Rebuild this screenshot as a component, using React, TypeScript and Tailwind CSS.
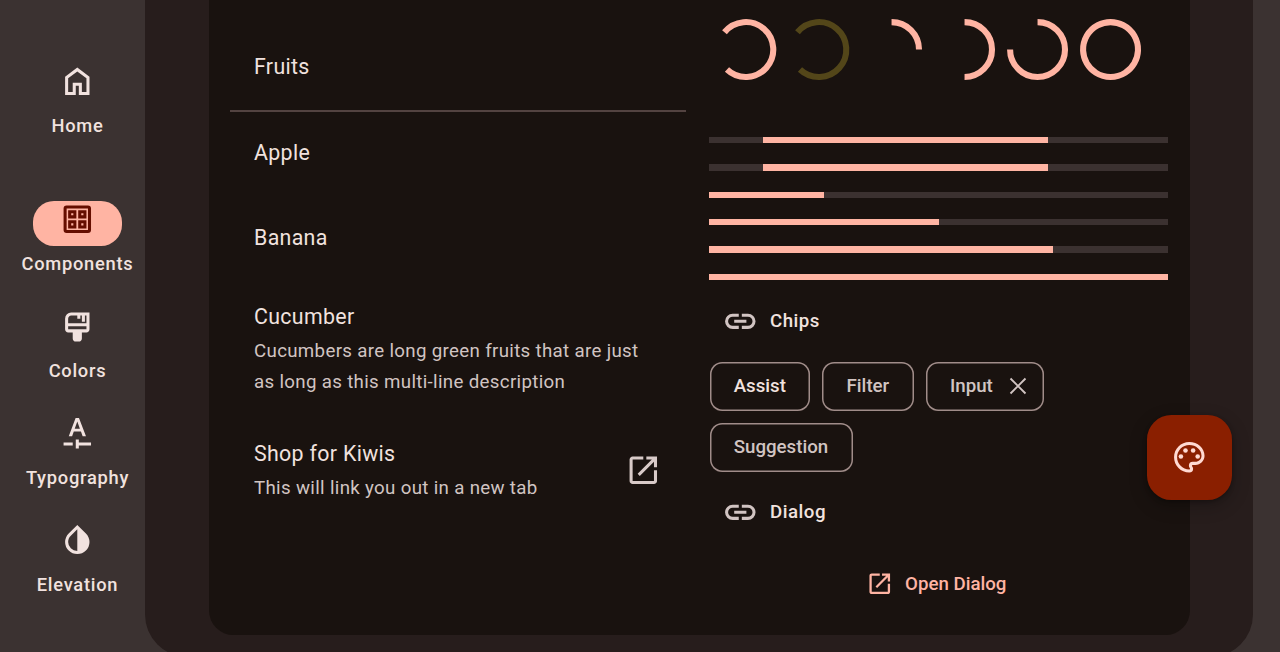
import type { ReactNode } from "react";

const OPEN_IN_NEW =
  "M5 21q-.825 0-1.412-.587T3 19V5q0-.825.588-1.412T5 3h7v2H5v14h14v-7h2v7q0 .825-.587 1.413T19 21zm4.7-5.3-1.4-1.4L17.6 5H14V3h7v7h-2V6.4z";
const LINK =
  "M11 17H7q-2.075 0-3.537-1.463T2 12t1.463-3.537T7 7h4v2H7q-1.25 0-2.125.875T4 12t.875 2.125T7 15h4zm-3-4v-2h8v2zm5 4v-2h4q1.25 0 2.125-.875T20 12t-.875-2.125T17 9h-4V7h4q2.075 0 3.538 1.463T22 12t-1.463 3.538T17 17z";

function Icon({ d, className = "size-[36.6px]" }: { d: string; className?: string }) {
  return (
    <svg viewBox="0 0 24 24" fill="currentColor" fillRule="evenodd" className={`block shrink-0 ${className}`}>
      <path d={d} />
    </svg>
  );
}

const navItems = [
  {
    label: "Home",
    box: "h-[137.5px]",
    d: "M6 19h3v-6h6v6h3v-9l-6-4.5L6 10zm-2 2V9l8-6 8 6v12h-7v-6h-2v6z",
  },
  {
    label: "Components",
    box: "h-[107.1px]",
    active: true,
    d: "M5 3h14a2 2 0 0 1 2 2v14a2 2 0 0 1-2 2H5a2 2 0 0 1-2-2V5a2 2 0 0 1 2-2zM5 5v14h14V5zM6 6h5.4v5.4H6zM8 8v1.4h1.4V8zM12.6 6H18v5.4h-5.4zM14.6 8v1.4H16V8zM6 12.6h5.4V18H6zM8 14.6V16h1.4v-1.4zM12.6 12.6H18V18h-5.4zM14.6 14.6V16H16v-1.4z",
  },
  {
    label: "Colors",
    box: "h-[107px]",
    d: "M11 22q-.825 0-1.412-.587T9 20v-4H6q-.825 0-1.412-.587T4 14V7q0-1.65 1.175-2.825T8 3h12v11q0 .825-.587 1.413T18 16h-3v4q0 .825-.587 1.413T13 22zM6 10h12V5h-1v4h-2V5h-1v2h-2V5H8q-.825 0-1.412.588T6 7zm0 4h12v-2H6z",
  },
  {
    label: "Typography",
    box: "h-[107px]",
    d: "M6.4 14 10.9 2h2.2l4.6 12h-2.2l-1.1-3.1H9.7L8.6 14zM10.3 9h3.4L12 4.3zM3 18h6v2H3zM11 16h2v2h8v2h-8v2h-2z",
  },
  {
    label: "Elevation",
    box: "h-[107px]",
    d: "M12 21q-3.325 0-5.663-2.3T4 13.1q0-1.575.613-3.012T6.35 7.55L12 2l5.65 5.55q1.125 1.1 1.738 2.538T20 13.1q0 3.3-2.337 5.6T12 21m0-2V4.8L7.75 9q-.875.825-1.312 1.863T6 13.1q0 2.425 1.75 4.163T12 19",
  },
];

function Sidebar() {
  return (
    <nav className="flex w-[145px] shrink-0 flex-col pl-[10px] pt-[63.1px] text-[#f1e2df]">
      {navItems.map((item) => (
        <div key={item.label} className={`flex shrink-0 flex-col items-center ${item.box}`}>
          {item.active ? (
            <div className="flex h-[45.6px] w-[89.4px] justify-center rounded-[21px] bg-[#ffb4a3] text-[#650e00]">
              <Icon d={item.d} />
            </div>
          ) : (
            <div className="flex h-[45.6px] justify-center">
              <Icon d={item.d} />
            </div>
          )}
          <span className="mt-[5.4px] text-[18.3px] leading-[24px] font-medium tracking-[0.74px] whitespace-nowrap">
            {item.label}
          </span>
        </div>
      ))}
    </nav>
  );
}

function ListItem({
  title,
  children,
  box,
  descBox = "",
  trailing,
}: {
  title: string;
  children?: ReactNode;
  box: string;
  descBox?: string;
  trailing?: boolean;
}) {
  return (
    <div className={`flex shrink-0 items-center pr-[24.8px] pl-[24px] ${box}`}>
      <div className="min-w-0 flex-1">
        <div className="text-[21.35px] leading-[36.6px] tracking-[0.33px]">{title}</div>
        {children && (
          <div
            className={`text-[18.7px] leading-[30.5px] tracking-[0.33px] whitespace-nowrap text-[#d1c4c2] ${descBox}`}
          >
            {children}
          </div>
        )}
      </div>
      {trailing && <Icon d={OPEN_IN_NEW} className="mt-[1px] size-[36.6px] text-[#d8cac8]" />}
    </div>
  );
}

function FruitList() {
  return (
    <div className="flex w-[456px] shrink-0 flex-col pt-[25px] text-[#f1e2df]">
      <ListItem title="Fruits" box="h-[85.4px]" />
      <div className="h-[1.5px] shrink-0 bg-[#534341]" />
      <ListItem title="Apple" box="h-[83.4px]" />
      <ListItem title="Banana" box="h-[85.4px]" />
      <ListItem title="Cucumber" box="h-[134px]" descBox="-mb-[0.8px] pt-[0.8px]">
        Cucumbers are long green fruits that are just
        <br />
        as long as this multi-line description
      </ListItem>
      <ListItem title="Shop for Kiwis" box="h-[109.8px]" trailing>
        This will link you out in a new tab
      </ListItem>
    </div>
  );
}

const arcs = [
  { d: "M15.5 19.3A27.5 27.5 0 1 1 18 56.6", color: "#ffb4a3" },
  { d: "M15.5 19.3A27.5 27.5 0 1 1 18 56.6", color: "#534619" },
  { d: "M36.6 9.1A27.5 27.5 0 0 1 64.1 36.6", color: "#ffb4a3" },
  { d: "M36.6 9.1A27.5 27.5 0 0 1 36.6 64.1", color: "#ffb4a3" },
  { d: "M36.6 9.1A27.5 27.5 0 1 1 9.1 36.6", color: "#ffb4a3" },
  { d: "M36.6 9.1A27.5 27.5 0 1 1 36.59 9.1Z", color: "#ffb4a3" },
];

const bars = [
  { start: 11.8, end: 73.85 },
  { start: 11.7, end: 73.85 },
  { start: 0, end: 25 },
  { start: 0, end: 50 },
  { start: 0, end: 75 },
  { start: 0, end: 100 },
];

function SectionTitle({ children }: { children: ReactNode }) {
  return (
    <div className="flex h-[36.6px] shrink-0 items-center gap-[11.4px] pl-[13px]">
      <Icon d={LINK} className="size-[36.6px] text-[#d1c4c2]" />
      <span className="text-[18.7px] font-medium tracking-[0.5px] text-[#f1e2df]">{children}</span>
    </div>
  );
}

function Chip({ children, box }: { children: ReactNode; box: string }) {
  return (
    <div
      className={`flex h-[48.8px] shrink-0 items-center rounded-[12.2px] pl-[24.2px] text-[18.7px] font-medium shadow-[inset_0_0_0_1.5px_#a08c89] ${box}`}
    >
      {children}
    </div>
  );
}

function Controls() {
  return (
    <div className="flex w-[459px] shrink-0 flex-col pt-[12.5px]">
      <div className="flex shrink-0">
        {arcs.map((arc, i) => (
          <svg key={i} viewBox="0 0 73.2 73.2" className="size-[73.1px] shrink-0" fill="none" strokeWidth="6.1">
            <path d={arc.d} stroke={arc.color} />
          </svg>
        ))}
      </div>
      <div className="mt-[51.5px] flex flex-col gap-[21.25px]">
        {bars.map((bar, i) => (
          <div key={i} className="flex h-[6.1px] shrink-0 bg-[#3b3130]">
            <div className="h-full bg-[#ffb4a3]" style={{ marginLeft: `${bar.start}%`, width: `${bar.end - bar.start}%` }} />
          </div>
        ))}
      </div>
      <div className="mt-[22.7px]">
        <SectionTitle>Chips</SectionTitle>
      </div>
      <div className="mt-[22.6px] flex flex-wrap gap-[12.2px] pl-[0.5px] text-[#d1c4c2]">
        <Chip box="w-[100.7px] text-[#f1e2df]">Assist</Chip>
        <Chip box="w-[91.2px]">Filter</Chip>
        <Chip box="w-[118.4px]">
          Input
          <svg viewBox="0 0 18 18" className="ml-[16px] size-[18px]" fill="none" stroke="currentColor" strokeWidth="1.9">
            <path d="M1.5 1.5l15 15M16.5 1.5l-15 15" />
          </svg>
        </Chip>
        <Chip box="w-[143px]">Suggestion</Chip>
      </div>
      <div className="mt-[22.5px]">
        <SectionTitle>Dialog</SectionTitle>
      </div>
      <div className="mt-[35.3px] flex h-[36px] items-center justify-center gap-[12px] pr-[5px] text-[#ffb4a3]">
        <Icon d={OPEN_IN_NEW} className="size-[27.5px]" />
        <span className="text-[18.7px] font-medium">Open Dialog</span>
      </div>
    </div>
  );
}

export default function App() {
  return (
    <div className="relative flex h-[652px] w-[1280px] overflow-hidden bg-[#3b3231] font-[Roboto,sans-serif]">
      <Sidebar />
      <main className="h-[657px] w-[1108px] shrink-0 rounded-b-[42.7px] bg-[#271d1c] pl-[64px]">
        <div className="flex h-[635px] w-[981px] gap-[23px] rounded-b-[24.4px] bg-[#19120f] pl-[21px]">
          <FruitList />
          <Controls />
        </div>
      </main>
      <button className="absolute top-[415px] left-[1147px] flex size-[85px] items-center justify-center rounded-[24.4px] bg-[#8a1f00] text-[#ffdad2] shadow-[0_6px_15px_4px_rgba(0,0,0,0.15),0_2px_4px_rgba(0,0,0,0.3)]">
        <svg viewBox="0 0 24 24" className="size-[36.6px]" fill="currentColor">
          <path d="M12 22C6.49 22 2 17.51 2 12S6.49 2 12 2s10 4.04 10 9c0 3.31-2.69 6-6 6h-1.77c-.28 0-.5.22-.5.5 0 .12.05.23.13.33.41.47.64 1.06.64 1.67A2.5 2.5 0 0 1 12 22zm0-18c-4.41 0-8 3.59-8 8s3.59 8 8 8c.28 0 .5-.22.5-.5a.54.54 0 0 0-.14-.35c-.41-.46-.63-1.05-.63-1.65a2.5 2.5 0 0 1 2.5-2.5H16c2.21 0 4-1.79 4-4 0-3.86-3.59-7-8-7z" />
          <circle cx="6.5" cy="11.5" r="1.5" />
          <circle cx="9.5" cy="7.5" r="1.5" />
          <circle cx="14.5" cy="7.5" r="1.5" />
          <circle cx="17.5" cy="11.5" r="1.5" />
        </svg>
      </button>
    </div>
  );
}
